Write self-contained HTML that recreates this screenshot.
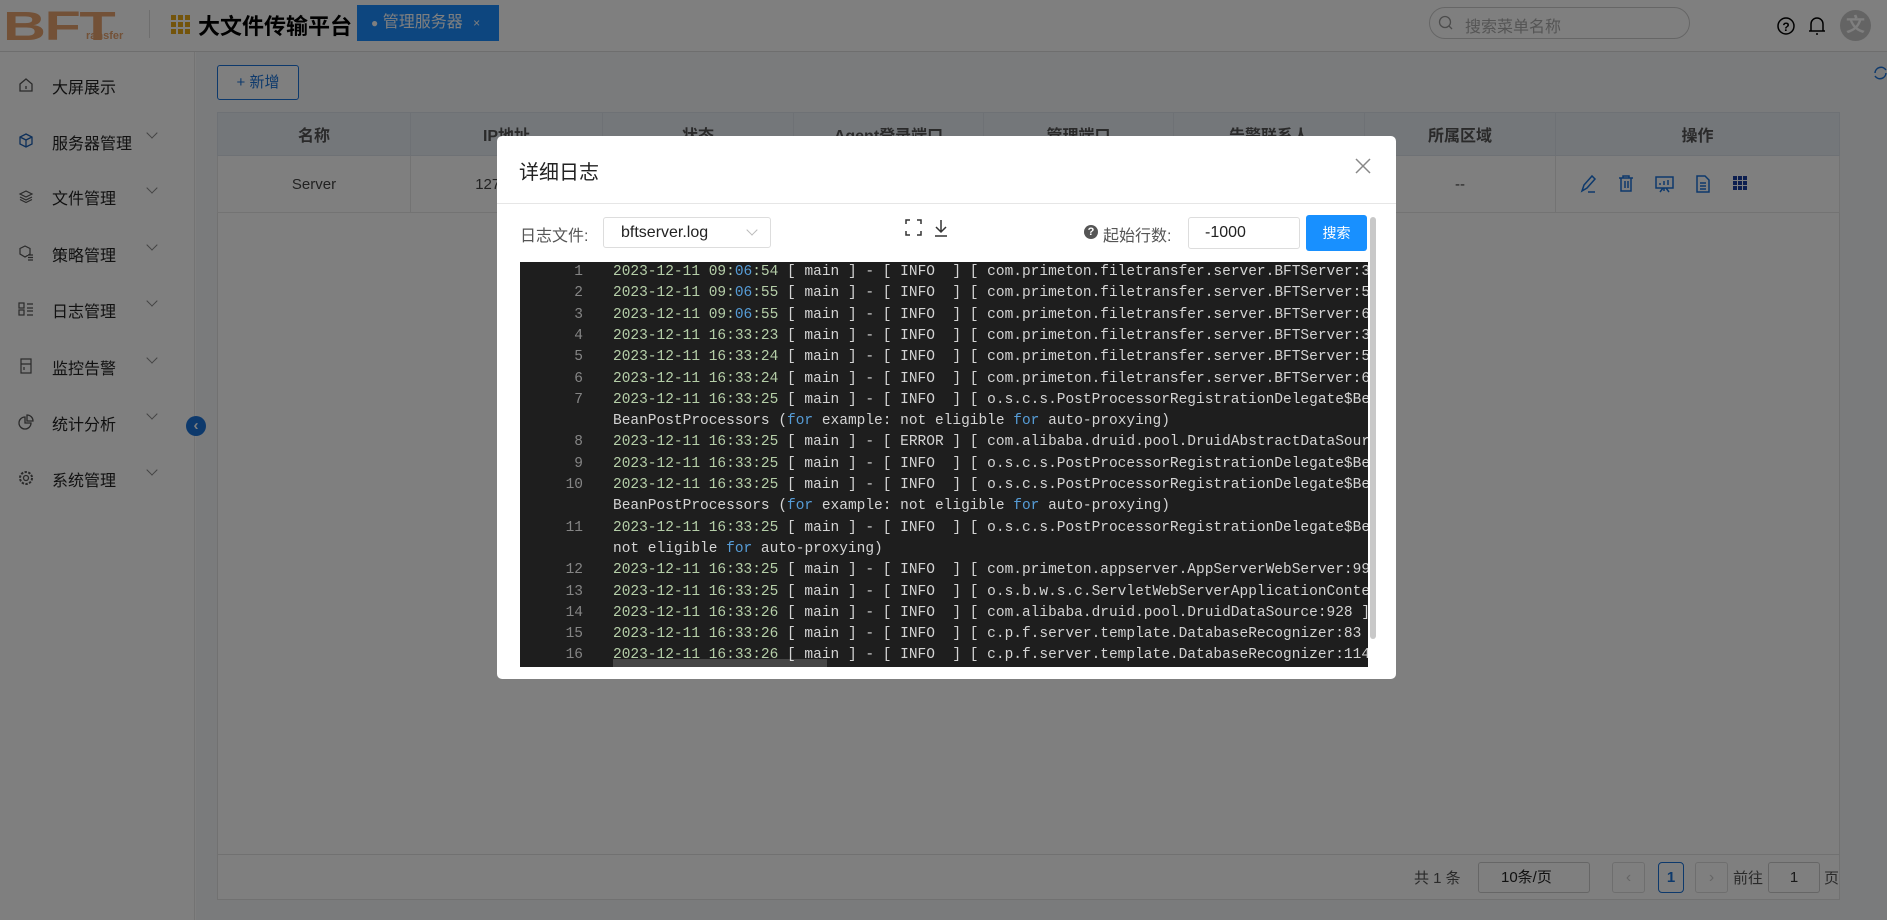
<!DOCTYPE html>
<html><head><meta charset="utf-8"><style>
*{box-sizing:border-box;margin:0;padding:0}
body{width:1887px;height:920px;overflow:hidden;position:relative;background:#fff;font-family:"Liberation Sans","Noto Sans CJK SC",sans-serif;color:#333}
.abs{position:absolute}
.hdr{left:0;top:0;width:1887px;height:52px;border-bottom:1px solid #ddd;background:#fff}
.side{left:0;top:52px;width:195px;height:868px;border-right:1px solid #e6e6e6;background:#fff}
.mi{position:absolute;left:0;width:195px;height:40px;font-size:16px;color:#222}
.mi .t{position:absolute;left:52px;top:9px}
.mi .c{position:absolute;left:148px;top:8px;width:8px;height:8px;border-right:1.5px solid #888;border-bottom:1.5px solid #888;transform:rotate(45deg)}
.mi svg{position:absolute;left:18px;top:12px}
.main{left:196px;top:52px;width:1691px;height:868px;background:#f5f6f8}
table{border-collapse:collapse}
.mask{left:0;top:0;width:1887px;height:920px;background:rgba(0,0,0,.5)}
.modal{left:497px;top:136px;width:899px;height:543px;background:#fff;border-radius:5px;overflow:hidden}
.log{left:23px;top:126px;width:848px;height:405px;background:#1e1e1e;overflow:hidden;font-family:"Liberation Mono",monospace;font-size:14.5px;color:#d4d4d4}
.r{position:absolute;left:0;height:21.3px;line-height:21.3px;white-space:pre;width:2000px}
.n{display:inline-block;width:63px;text-align:right;color:#858585;margin-right:30px}
.d{color:#b5cea8}.b{color:#569cd6}
</style></head><body>
<!-- header -->
<div class="abs hdr">
 <div class="abs" style="left:3px;top:3px;font:900 41px 'Liberation Sans',sans-serif;color:#e7a36e;transform:scaleX(1.45);transform-origin:0 0;letter-spacing:-1px">BFT</div>
 <div class="abs" style="left:86px;top:30px;font:bold 11px 'Liberation Sans',sans-serif;color:#e7a36e">ransfer</div>
 <div class="abs" style="left:149px;top:10px;width:1px;height:28px;background:#ddd"></div>
 <svg class="abs" style="left:171px;top:15px" width="19" height="19"><g fill="#e6a817"><rect x="0" y="0" width="5" height="5"/><rect x="7" y="0" width="5" height="5"/><rect x="14" y="0" width="5" height="5"/><rect x="0" y="7" width="5" height="5"/><rect x="7" y="7" width="5" height="5"/><rect x="14" y="7" width="5" height="5"/><rect x="0" y="14" width="5" height="5"/><rect x="7" y="14" width="5" height="5"/><rect x="14" y="14" width="5" height="5"/></g></svg>
 <div class="abs" style="left:198px;top:9px;font-size:22px;font-weight:bold;color:#000">大文件传输平台</div>
 <div class="abs" style="left:357px;top:5px;width:142px;height:36px;background:#1a8cff;color:#fff;font-size:16px;line-height:36px;padding-left:14px"><span style="font-size:12px">●</span> 管理服务器 <span style="font-size:12px;margin-left:6px">×</span></div>
 <div class="abs" style="left:1429px;top:7px;width:261px;height:32px;border:1px solid #ccc;border-radius:16px">
  <svg class="abs" style="left:8px;top:7px" width="16" height="16"><circle cx="7" cy="7" r="5.5" fill="none" stroke="#999" stroke-width="1.3"/><line x1="11" y1="11" x2="14" y2="14" stroke="#999" stroke-width="1.3"/></svg>
  <div class="abs" style="left:35px;top:5px;font-size:16px;color:#aaa">搜索菜单名称</div></div>
 <svg class="abs" style="left:1776px;top:16px" width="20" height="20"><circle cx="10" cy="10" r="8" fill="none" stroke="#000" stroke-width="1.5"/><text x="10" y="15" font-size="12" text-anchor="middle" font-family="Liberation Sans" font-weight="bold">?</text></svg>
 <svg class="abs" style="left:1808px;top:15px" width="18" height="22"><path d="M3 16 V9 a6 6 0 0 1 12 0 V16 M1 16 H17 M8 19 h2" fill="none" stroke="#000" stroke-width="1.5"/></svg>
 <div class="abs" style="left:1840px;top:10px;width:31px;height:31px;border-radius:50%;background:#c8c8c8;color:#fff;font-size:19px;font-weight:bold;text-align:center;line-height:31px">文</div>
</div>
<!-- sidebar -->
<div class="abs side">
 <div class="mi" style="top:13px"><svg width="16" height="16"><path d="M2 7 L8 2 L14 7 V14 H2Z M8 9 v3" fill="none" stroke="#555" stroke-width="1.3"/></svg><span class="t">大屏展示</span></div>
 <div class="mi" style="top:69px"><svg width="16" height="16"><path d="M8 1 L14 4 V11 L8 14 L2 11 V4Z M2 4 L8 7 L14 4 M8 7 V14" fill="none" stroke="#1a5fb4" stroke-width="1.3"/></svg><span class="t">服务器管理</span><span class="c"></span></div>
 <div class="mi" style="top:124px"><svg width="16" height="16"><path d="M8 3 L14 6 L8 9 L2 6Z M2 9 L8 12 L14 9 M2 11.5 L8 14.5 L14 11.5" fill="none" stroke="#555" stroke-width="1.2"/></svg><span class="t">文件管理</span><span class="c"></span></div>
 <div class="mi" style="top:181px"><svg width="16" height="16"><path d="M7 1 L12 3.5 V9 L7 12 L2 9 V3.5Z M10 10 h5 M10 12.5 h5 M10 15 h5" fill="none" stroke="#555" stroke-width="1.2"/></svg><span class="t">策略管理</span><span class="c"></span></div>
 <div class="mi" style="top:237px"><svg width="16" height="16"><rect x="1" y="2" width="5" height="5" fill="none" stroke="#555" stroke-width="1.2"/><rect x="1" y="9" width="5" height="5" fill="none" stroke="#555" stroke-width="1.2"/><path d="M9 3h6M9 7h6M9 10h6M9 14h6" stroke="#555" stroke-width="1.2"/></svg><span class="t">日志管理</span><span class="c"></span></div>
 <div class="mi" style="top:294px"><svg width="16" height="16"><rect x="3" y="1" width="10" height="14" fill="none" stroke="#555" stroke-width="1.2"/><path d="M3 6h10M6 9v3" stroke="#555" stroke-width="1.2"/></svg><span class="t">监控告警</span><span class="c"></span></div>
 <div class="mi" style="top:350px"><svg width="16" height="16"><path d="M7 3 A6 6 0 1 0 13 9 H7Z M9 1 A6 6 0 0 1 15 7 H9Z" fill="none" stroke="#555" stroke-width="1.3"/></svg><span class="t">统计分析</span><span class="c"></span></div>
 <div class="mi" style="top:406px"><svg width="16" height="16"><circle cx="8" cy="8" r="2.5" fill="none" stroke="#555" stroke-width="1.3"/><circle cx="8" cy="8" r="6" fill="none" stroke="#555" stroke-width="2" stroke-dasharray="2.4 1.4"/></svg><span class="t">系统管理</span><span class="c"></span></div>
</div>
<!-- main -->
<div class="abs main"></div>
<div class="abs" style="left:186px;top:416px;width:20px;height:20px;border-radius:50%;background:#1a73d9;color:#fff;font-size:15px;text-align:center;line-height:19px;font-weight:bold">‹</div>
<div class="abs" style="left:217px;top:65px;width:82px;height:35px;border:1px solid #1a73d9;border-radius:3px;color:#1a73d9;font-size:15px;line-height:33px;text-align:center;background:#fff">+ 新增</div>
<svg class="abs" style="left:1873px;top:65px" width="14" height="16"><path d="M2 8 a6 6 0 0 1 11 -3 M13 8 a6 6 0 0 1 -11 3" fill="none" stroke="#1a73d9" stroke-width="1.5"/></svg>
<div class="abs" style="left:217px;top:112px;width:1623px;height:788px;border:1px solid #e3e3e3;background:#fff"></div>
<table class="abs" style="left:217px;top:112px;width:1623px;font-size:16px">
<tr style="height:43px;background:#e9eef5;color:#555;font-weight:bold">
<td style="width:193px;text-align:center;border:1px solid #dde2ea">名称</td><td style="width:192px;text-align:center;border:1px solid #dde2ea">IP地址</td><td style="width:191px;text-align:center;border:1px solid #dde2ea">状态</td><td style="width:190px;text-align:center;border:1px solid #dde2ea">Agent登录端口</td><td style="width:190px;text-align:center;border:1px solid #dde2ea">管理端口</td><td style="width:191px;text-align:center;border:1px solid #dde2ea">告警联系人</td><td style="width:191px;text-align:center;border:1px solid #dde2ea">所属区域</td><td style="text-align:center;border:1px solid #dde2ea">操作</td></tr>
<tr style="height:57px;color:#444;font-size:15px">
<td style="text-align:center;border:1px solid #e6e6e6">Server</td><td style="text-align:center;border:1px solid #e6e6e6">127.0.0.1</td><td style="border:1px solid #e6e6e6"></td><td style="border:1px solid #e6e6e6"></td><td style="border:1px solid #e6e6e6"></td><td style="border:1px solid #e6e6e6"></td><td style="text-align:center;border:1px solid #e6e6e6">--</td><td style="border:1px solid #e6e6e6"></td></tr>
</table>
<svg class="abs" style="left:1580px;top:174px" width="170" height="20"><g fill="none" stroke="#1a73d9" stroke-width="1.5"><path d="M2 17 L4 11 L12 2 L15 5 L7 14Z M8 18 h7"/><path d="M39 4 h14 M43 4 v-2 h6 v2 M41 4 v13 h10 v-13 M45 7 v7 M48 7 v7"/><path d="M76 3 h17 v11 h-17z M84 14 v3 M80 18 l3 -4 M89 18 l-3 -4 M80 11 v-2 M84 11 v-4 M88 11 v-5"/><path d="M117 2 h8 l4 4 v12 h-12z M120 9 h6 M120 12 h6 M120 15 h6"/></g><g fill="#1a3fa0"><rect x="153" y="2" width="4" height="4"/><rect x="158" y="2" width="4" height="4"/><rect x="163" y="2" width="4" height="4"/><rect x="153" y="7" width="4" height="4"/><rect x="158" y="7" width="4" height="4"/><rect x="163" y="7" width="4" height="4"/><rect x="153" y="12" width="4" height="4"/><rect x="158" y="12" width="4" height="4"/><rect x="163" y="12" width="4" height="4"/></g></svg>
<div class="abs" style="left:217px;top:854px;width:1623px;height:1px;background:#e3e3e3"></div>
<div class="abs" style="left:1414px;top:867px;font-size:15px;color:#555">共 1 条</div>
<div class="abs" style="left:1478px;top:862px;width:112px;height:31px;border:1px solid #ccc;border-radius:3px;font-size:15px;line-height:29px;padding-left:22px;color:#222">10条/页</div>
<div class="abs" style="left:1612px;top:862px;width:33px;height:31px;border:1px solid #ddd;border-radius:3px;color:#ccc;text-align:center;line-height:29px">‹</div>
<div class="abs" style="left:1658px;top:862px;width:26px;height:31px;border:1px solid #1a73d9;border-radius:4px;color:#1a73d9;text-align:center;line-height:29px;font-weight:bold;font-size:15px">1</div>
<div class="abs" style="left:1695px;top:862px;width:33px;height:31px;border:1px solid #ddd;border-radius:3px;color:#ccc;text-align:center;line-height:29px">›</div>
<div class="abs" style="left:1733px;top:867px;font-size:15px;color:#555">前往</div>
<div class="abs" style="left:1768px;top:862px;width:52px;height:31px;border:1px solid #ccc;border-radius:3px;text-align:center;line-height:29px;font-size:15px">1</div>
<div class="abs" style="left:1824px;top:867px;font-size:15px;color:#555">页</div>
<div class="abs mask"></div>
<!-- modal -->
<div class="abs modal">
 <div class="abs" style="left:22px;top:20px;font-size:20px;color:#222">详细日志</div>
 <svg class="abs" style="left:858px;top:22px" width="16" height="16"><path d="M1 1 L15 15 M15 1 L1 15" stroke="#888" stroke-width="1.5"/></svg>
 <div class="abs" style="left:0;top:67px;width:899px;height:1px;background:#e6e6e6"></div>
 <div class="abs" style="left:23px;top:86px;font-size:16px;color:#555">日志文件:</div>
 <div class="abs" style="left:106px;top:81px;width:168px;height:31px;border:1px solid #ddd;border-radius:3px;font-size:16px;line-height:29px;padding-left:17px;color:#222">bftserver.log<span style="position:absolute;right:14px;top:8px;width:8px;height:8px;border-right:1px solid #bbb;border-bottom:1px solid #bbb;transform:rotate(45deg)"></span></div>
 <svg class="abs" style="left:408px;top:83px" width="50" height="20"><path d="M1 5V1h4 M12 1h4v4 M16 12v4h-4 M5 16H1v-4" fill="none" stroke="#333" stroke-width="1.5"/><path d="M36 1 v12 M31 8 l5 5 l5 -5 M30 17 h12" fill="none" stroke="#333" stroke-width="1.5"/></svg>
 <div class="abs" style="left:587px;top:89px;width:14px;height:14px;border-radius:50%;background:#555;color:#fff;font-size:11px;font-weight:bold;text-align:center;line-height:14px">?</div>
 <div class="abs" style="left:606px;top:86px;font-size:16px;color:#555">起始行数:</div>
 <div class="abs" style="left:691px;top:81px;width:112px;height:32px;border:1px solid #ddd;border-radius:3px;font-size:16px;line-height:30px;padding-left:16px;color:#222">-1000</div>
 <div class="abs" style="left:809px;top:79px;width:61px;height:36px;background:#1890ff;border-radius:3px;color:#fff;font-size:14px;text-align:center;line-height:36px">搜索</div>
 <div class="abs" style="left:873px;top:81px;width:6px;height:422px;background:#c8c8c8;border-radius:3px"></div>
 <div class="abs log">
  <div class="r" style="top:0"><span class="n">1</span><span class="d">2023-12-11 09:<span class="b">06</span>:54</span> [ main ] - [ INFO  ] [ com.primeton.filetransfer.server.BFTServer:34 ]</div>
  <div class="r" style="top:21.3px"><span class="n">2</span><span class="d">2023-12-11 09:<span class="b">06</span>:55</span> [ main ] - [ INFO  ] [ com.primeton.filetransfer.server.BFTServer:55 ]</div>
  <div class="r" style="top:42.6px"><span class="n">3</span><span class="d">2023-12-11 09:<span class="b">06</span>:55</span> [ main ] - [ INFO  ] [ com.primeton.filetransfer.server.BFTServer:61 ]</div>
  <div class="r" style="top:63.9px"><span class="n">4</span><span class="d">2023-12-11 16:33:23</span> [ main ] - [ INFO  ] [ com.primeton.filetransfer.server.BFTServer:34 ]</div>
  <div class="r" style="top:85.2px"><span class="n">5</span><span class="d">2023-12-11 16:33:24</span> [ main ] - [ INFO  ] [ com.primeton.filetransfer.server.BFTServer:55 ]</div>
  <div class="r" style="top:106.5px"><span class="n">6</span><span class="d">2023-12-11 16:33:24</span> [ main ] - [ INFO  ] [ com.primeton.filetransfer.server.BFTServer:61 ]</div>
  <div class="r" style="top:127.8px"><span class="n">7</span><span class="d">2023-12-11 16:33:25</span> [ main ] - [ INFO  ] [ o.s.c.s.PostProcessorRegistrationDelegate$BeanPostProcessorChecker</div>
  <div class="r" style="top:149.1px"><span class="n"></span>BeanPostProcessors (<span class="b">for</span> example: not eligible <span class="b">for</span> auto-proxying)</div>
  <div class="r" style="top:170.4px"><span class="n">8</span><span class="d">2023-12-11 16:33:25</span> [ main ] - [ ERROR ] [ com.alibaba.druid.pool.DruidAbstractDataSource</div>
  <div class="r" style="top:191.7px"><span class="n">9</span><span class="d">2023-12-11 16:33:25</span> [ main ] - [ INFO  ] [ o.s.c.s.PostProcessorRegistrationDelegate$BeanPostProcessorChecker</div>
  <div class="r" style="top:213px"><span class="n">10</span><span class="d">2023-12-11 16:33:25</span> [ main ] - [ INFO  ] [ o.s.c.s.PostProcessorRegistrationDelegate$BeanPostProcessorChecker</div>
  <div class="r" style="top:234.3px"><span class="n"></span>BeanPostProcessors (<span class="b">for</span> example: not eligible <span class="b">for</span> auto-proxying)</div>
  <div class="r" style="top:255.6px"><span class="n">11</span><span class="d">2023-12-11 16:33:25</span> [ main ] - [ INFO  ] [ o.s.c.s.PostProcessorRegistrationDelegate$BeanPostProcessorChecker</div>
  <div class="r" style="top:276.9px"><span class="n"></span>not eligible <span class="b">for</span> auto-proxying)</div>
  <div class="r" style="top:298.2px"><span class="n">12</span><span class="d">2023-12-11 16:33:25</span> [ main ] - [ INFO  ] [ com.primeton.appserver.AppServerWebServer:99 ]</div>
  <div class="r" style="top:319.5px"><span class="n">13</span><span class="d">2023-12-11 16:33:25</span> [ main ] - [ INFO  ] [ o.s.b.w.s.c.ServletWebServerApplicationContext</div>
  <div class="r" style="top:340.8px"><span class="n">14</span><span class="d">2023-12-11 16:33:26</span> [ main ] - [ INFO  ] [ com.alibaba.druid.pool.DruidDataSource:928 ]</div>
  <div class="r" style="top:362.1px"><span class="n">15</span><span class="d">2023-12-11 16:33:26</span> [ main ] - [ INFO  ] [ c.p.f.server.template.DatabaseRecognizer:83 ]</div>
  <div class="r" style="top:383.4px"><span class="n">16</span><span class="d">2023-12-11 16:33:26</span> [ main ] - [ INFO  ] [ c.p.f.server.template.DatabaseRecognizer:114 ]</div>
  <div class="abs" style="left:93px;top:397px;width:214px;height:8px;background:rgba(255,255,255,.18)"></div>
 </div>
</div>
</body></html>
